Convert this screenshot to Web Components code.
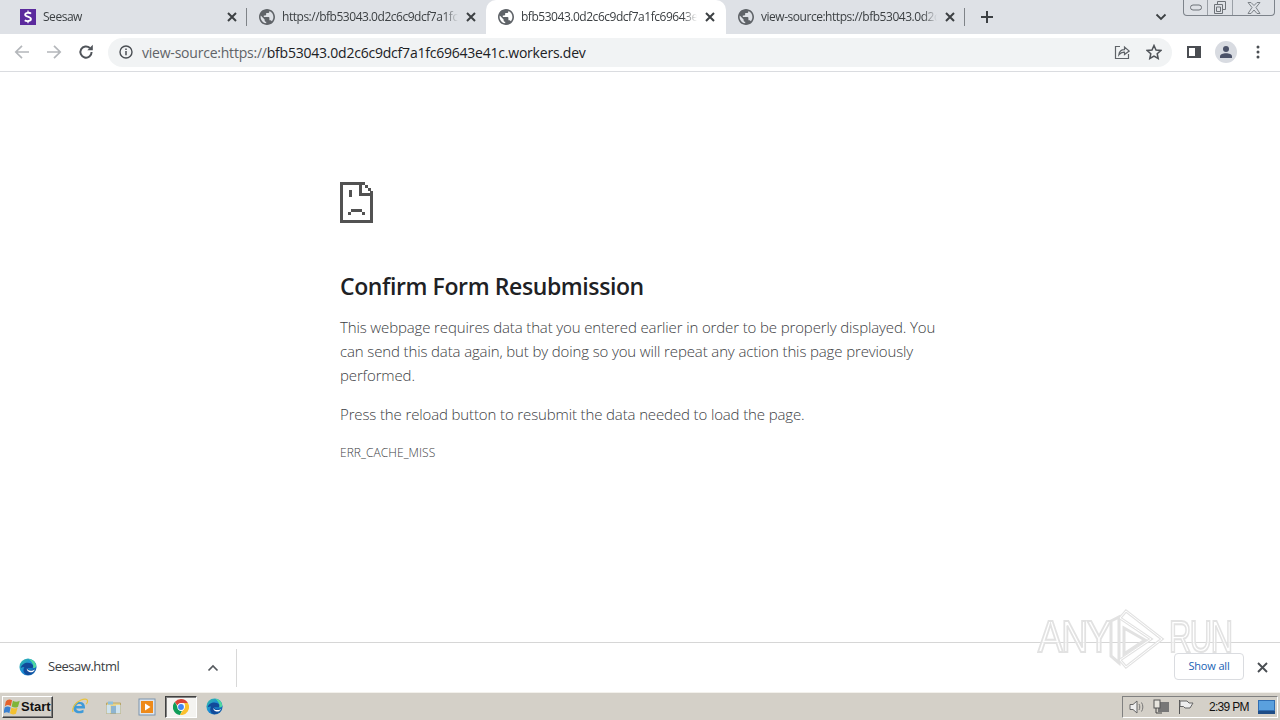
<!DOCTYPE html>
<html lang="en"><head><meta charset="utf-8"><title>Confirm Form Resubmission</title>
<style>
html,body{margin:0;padding:0;width:1280px;height:720px;overflow:hidden;background:#fff;font-family:"Open Sans","Noto Sans",sans-serif}
</style></head><body>
<browser-app>
  <tab-strip>
    <browser-tab icon="seesaw" title-text="Seesaw" sep></browser-tab>
    <browser-tab icon="globe" title-text="https://bfb53043.0d2c6c9dcf7a1fc69643e41c.workers.dev"></browser-tab>
    <browser-tab icon="globe" title-text="bfb53043.0d2c6c9dcf7a1fc69643e41c.workers.dev" active></browser-tab>
    <browser-tab icon="globe" title-text="view-source:https://bfb53043.0d2c6c9dcf7a1fc69643e41c.workers.dev" sep></browser-tab>
  </tab-strip>
  <nav-toolbar></nav-toolbar>
  <error-page>
    <span slot="title">Confirm Form Resubmission</span>
    <span slot="line1">This webpage requires data that you entered earlier in order to be properly displayed. You can send this data again, but by doing so you will repeat any action this page previously performed.</span>
    <span slot="line2">Press the reload button to resubmit the data needed to load the page.</span>
    <span slot="code">ERR_CACHE_MISS</span>
  </error-page>
  <download-shelf></download-shelf>
  <win-taskbar></win-taskbar>
  <any-watermark></any-watermark>
</browser-app>
<script>
const GLOBE='<svg width="16" height="16" viewBox="2 2 20 20"><path fill="#5f6368" d="M12 2C6.48 2 2 6.48 2 12s4.48 10 10 10 10-4.48 10-10S17.52 2 12 2zm-1 17.93c-3.95-.49-7-3.85-7-7.93 0-.62.08-1.21.21-1.79L9 15v1c0 1.1.9 2 2 2v1.93zm6.9-2.54c-.26-.81-1-1.39-1.9-1.39h-1v-3c0-.55-.45-1-1-1H8v-2h2c.55 0 1-.45 1-1V7h2c1.1 0 2-.9 2-2v-.41c2.93 1.19 5 4.06 5 7.41 0 2.08-.8 3.97-2.1 5.39z"/></svg>';
const SEESAW='<svg width="16" height="16" viewBox="0 0 16 16"><rect width="16" height="16" fill="#5b2a9d"/><path d="M11 4.600C10 3.600 5.400 3.200 5.200 5.600 5 8 10.900 7.200 10.900 10c0 2.400-4.600 2.600-6.100 1.200" fill="none" stroke="#fff" stroke-width="1.900"/><path d="M8 1.600v1.600M8 12.600v1.600" stroke="#fff" stroke-width="1.200"/></svg>';
const EDGE=s=>`<svg width="${s}" height="${s}" viewBox="0 0 20 20"><defs><linearGradient id="e1" x1="0" y1="0" x2="1" y2="1"><stop offset="0" stop-color="#35c1a0"/><stop offset=".45" stop-color="#1c8fd6"/><stop offset="1" stop-color="#0c4f9e"/></linearGradient></defs><circle cx="10" cy="10" r="9.500" fill="url(#e1)"/><path d="M2 11C3 5 12 3 15.500 8c.9 1.400.5 3-1.600 3H9.600c.2 2.400 4 3.600 8.400 1.600C16.600 16 13 19 9.500 19 5 18 4 13 6 10 4.500 10 3 10.400 2 11z" fill="#114a9a"/><path d="M8.800 11.500c.4 2.700 4.700 3.800 9 1.300-.5 1-1.300 2-2.400 2.800-3.300 1-7.300-.6-6.600-4.100z" fill="#fff"/><path d="M11 1c4 .4 7.600 3 8 7.500.2 2-1.500 2.700-3.500 2.500 1.400-3-1-6.500-4.500-10z" fill="#4fd8a0"/></svg>`;
function def(name,css,html){
  customElements.define(name,class extends HTMLElement{
    constructor(){super();this.attachShadow({mode:'open'}).innerHTML=`<style>${css}</style>${html}`;}
  });
}
def('browser-app',`:host{display:flex;flex-direction:column;width:1280px;height:720px;position:relative;overflow:hidden}`,`<slot></slot>`);

def('tab-strip',`:host{display:flex;height:34px;background:#dee1e6;padding-left:8px;box-sizing:border-box;align-items:stretch;position:relative;flex:none}
.tabs{display:flex}
.tail{display:flex;align-items:center;flex:1;position:relative}
.plus{margin-left:13px;width:18px;height:18px}
.chev{margin-left:auto;margin-right:113px}
.win{position:absolute;right:5px;top:0;width:92px;height:16px;box-sizing:border-box;border:1px solid #7d838b;border-top:0;border-radius:0 0 4px 4px;display:flex}
.win div{display:flex;align-items:center;justify-content:center;box-sizing:border-box}
.win .a{width:24px;border-right:1px solid #9a9fa6}.win .b{width:25px;border-right:1px solid #9a9fa6}.win .c{flex:1}
`,`<div class="tabs"><slot></slot></div><div class="tail">
<svg class="plus" viewBox="0 0 18 18"><path d="M9 3v12M3 9h12" stroke="#3c4043" stroke-width="2"/></svg>
<svg class="chev" width="12" height="8" viewBox="0 0 12 8"><path d="M1.500 1.500 6 6l4.500-4.500" fill="none" stroke="#3c4043" stroke-width="1.800"/></svg>
<div class="win"><div class="a"><svg width="14" height="7" viewBox="0 0 14 7"><rect x="1.500" y="1" width="11" height="5" rx="2.500" fill="none" stroke="#6d7278"/></svg></div>
<div class="b"><svg width="14" height="14" viewBox="0 0 14 14"><path d="M4.500 3V.5h8v8H10M1.500 3.500h8v9h-8zM3.500 6h4v4.500h-4z" fill="none" stroke="#6d7278"/></svg></div>
<div class="c"><svg width="14" height="12" viewBox="0 0 14 12"><path d="M1 .5h3L7 3.500 10 .5h3L9 5.500l4 6h-3L7 8 4 11.500H1l4-6z" fill="none" stroke="#7d8288"/></svg></div></div></div>`);

customElements.define('browser-tab',class extends HTMLElement{
  constructor(){super();this.attachShadow({mode:'open'});}
  connectedCallback(){
    const active=this.hasAttribute('active');
    const ico=this.getAttribute('icon')==='seesaw'?SEESAW:GLOBE;
    this.shadowRoot.innerHTML=`<style>
    :host{display:block;width:${active?240:239}px;height:34px;position:relative;box-sizing:border-box;flex:none}
    .t{height:34px;box-sizing:border-box;padding:0 0 0 12px;display:flex;align-items:center;position:relative;color:#3c4043;font:12px/16px "Open Sans","Noto Sans",sans-serif;letter-spacing:-.47px;${active?'background:#fff;border-radius:10px 10px 0 0':''}}
    .i{width:16px;height:16px;flex:none;display:flex}
    .l{margin-left:7px;width:176px;white-space:nowrap;overflow:hidden;flex:none;-webkit-mask-image:linear-gradient(90deg,#000 calc(100% - 14px),transparent);mask-image:linear-gradient(90deg,#000 calc(100% - 14px),transparent)}
    .x{width:12px;height:12px;flex:none;margin-left:7px}
    .s{position:absolute;right:0;top:8px;height:18px;width:1px;background:#7f8388}
    </style><div class="t"><span class="i">${ico}</span><span class="l">${this.getAttribute('title-text')}</span><svg class="x" viewBox="0 0 12 12"><path d="M2 2l8 8M10 2l-8 8" stroke="#3c4043" stroke-width="2"/></svg>${this.hasAttribute('sep')?'<i class="s"></i>':''}</div>`;
  }
});

def('nav-toolbar',`:host{display:flex;align-items:center;height:38px;flex:none;box-sizing:border-box;background:#fff;border-bottom:1px solid #dadce0;padding:0 0 1px 0;font:14px/20px "Open Sans","Noto Sans",sans-serif}
.n{display:flex;width:32px;justify-content:center;flex:none}
.nav{display:flex;padding-left:6px}
.omni{margin-left:6px;width:1064px;height:29px;border-radius:15px;background:#f1f3f4;display:flex;align-items:center;box-sizing:border-box;padding-left:11px;flex:none}
.url{margin:1px 0 0 9px;color:#5f6368;letter-spacing:-.22px;white-space:nowrap}.url b{font-weight:400;color:#202124}
.end{margin-left:auto;display:flex;align-items:center}
.share{margin-right:16px;display:flex}.star{margin-right:10px;display:flex}
.right{display:flex;align-items:center;margin-left:15px}
.av{width:22px;height:22px;border-radius:50%;background:#d8dbe1;display:flex;align-items:center;justify-content:center;margin-left:14px}
.ke{margin-left:19px;display:flex}
`,`<div class="nav">
<div class="n"><svg width="16" height="16" viewBox="0 0 16 16"><path d="M15 8H2M8 1.800 1.800 8 8 14.200" fill="none" stroke="#b4b7bb" stroke-width="1.700"/></svg></div>
<div class="n"><svg width="16" height="16" viewBox="0 0 16 16"><path d="M1 8h13M8 1.800 14.200 8 8 14.200" fill="none" stroke="#b4b7bb" stroke-width="1.700"/></svg></div>
<div class="n"><svg width="16" height="16" viewBox="0 0 16 16"><path d="M13.600 8a5.600 5.600 0 1 1-1.700-4" fill="none" stroke="#50545a" stroke-width="2"/><path d="M9.300 6.300h5.500V.8z" fill="#50545a"/></svg></div></div>
<div class="omni"><svg width="14" height="14" viewBox="0 0 14 14"><circle cx="7" cy="7" r="6" fill="none" stroke="#4a4e53" stroke-width="1.400"/><path d="M7 6v4.200M7 3.400v1.500" stroke="#4a4e53" stroke-width="1.500"/></svg>
<span class="url">view-source:https://<b>bfb53043.0d2c6c9dcf7a1fc69643e41c.workers.dev</b></span>
<div class="end"><span class="share"><svg width="16" height="16" viewBox="0 0 16 16"><path d="M14.500 10v4.500h-13v-12H6" fill="none" stroke="#5f6368" stroke-width="1.200"/><path d="M4.800 11c.4-3.500 3-5.300 5.700-5.300V3l4.700 4-4.700 3.600V8.200C8.500 8 6.400 9 4.800 11z" fill="none" stroke="#5f6368" stroke-width="1.200"/></svg></span>
<span class="star"><svg width="16" height="16" viewBox="0 0 16 16"><path d="M8 1.500l2 4.500 4.800.5-3.600 3.200 1 4.800L8 12.100 3.800 14.500l1-4.800L1.200 6.500 6 6z" fill="none" stroke="#4f5358" stroke-width="1.500"/></svg></span></div></div>
<div class="right"><svg width="14" height="14" viewBox="0 0 14 14" shape-rendering="crispEdges"><rect x="0" y="1" width="14" height="12" fill="#4a4d52"/><rect x="2" y="3" width="6" height="8" fill="#fff"/></svg>
<span class="av"><svg width="14" height="14" viewBox="0 0 14 14"><circle cx="7" cy="4" r="3" fill="#4b5268"/><path d="M1 13v-1.500C1 9.500 4 8.300 7 8.300s6 1.200 6 3.200V13z" fill="#4b5268"/></svg></span>
<span class="ke"><svg width="4" height="14" viewBox="0 0 4 14"><circle cx="2" cy="2" r="1.500" fill="#4a4e53"/><circle cx="2" cy="7" r="1.500" fill="#4a4e53"/><circle cx="2" cy="12" r="1.500" fill="#4a4e53"/></svg></span></div>`);

def('error-page',`:host{display:block;flex:1;min-height:0;background:#fff;padding:110px 0 0 340px;box-sizing:border-box;color:#3c4043;font:15px/24px "Open Sans","Noto Sans",sans-serif}
svg{display:block}
h1{margin:47px 0 0;font:600 23px/32px "Open Sans","Noto Sans",sans-serif;color:#202124;letter-spacing:-.4px}
p{margin:0;width:600px;letter-spacing:-.13px;font-weight:300}
.a{margin-top:13px}.b{margin-top:15px}
.c{margin-top:19px;font-size:12px;line-height:16px;letter-spacing:.05px;font-weight:300}
`,`<svg width="33" height="41" viewBox="0 0 33 41" shape-rendering="crispEdges"><path fill="#525252" d="M0 0h22v3H3v35h27V11h3v30H0zM19 0h3v11h11v3H19zM22 0h3v3h3v3h3v3h2v2h-3V9h-2V6h-3V3h-3zM9 8h3v7H9zM11 27h11v3H11zM8 30h3v3H8zM22 30h3v3h-3z"/></svg>
<h1><slot name="title"></slot></h1><p class="a"><slot name="line1"></slot></p><p class="b"><slot name="line2"></slot></p><div class="c"><slot name="code"></slot></div>`);

def('download-shelf',`:host{display:flex;align-items:center;height:50px;flex:none;box-sizing:border-box;background:#fff;border-top:1px solid #d6d6d6;font:13px/18px "Open Sans","Noto Sans",sans-serif;color:#3c4043}
.item{display:flex;align-items:center;width:237px;height:38px;box-sizing:border-box;padding-left:19px;border-right:1px solid #d8d8d8;flex:none}
.ic{display:flex;margin-top:-1px}
.name{margin:-3px 0 0 11px;letter-spacing:-.47px}
.up{margin-left:auto;margin-right:17px}
.show{margin:-3px 0 0 auto;width:70px;height:27px;box-sizing:border-box;border:1px solid #dadce0;border-radius:4px;color:#1a5fb4;font-size:11px;letter-spacing:-.16px;display:flex;align-items:center;justify-content:center}
.x{margin:0 12px 0 13px}
`,`<div class="item"><span class="ic">${EDGE(18)}</span><span class="name">Seesaw.html</span><svg class="up" width="12" height="8" viewBox="0 0 12 8"><path d="M1.500 6.500 6 2l4.500 4.500" fill="none" stroke="#55595e" stroke-width="1.700"/></svg></div>
<div class="show">Show all</div><svg class="x" width="11" height="11" viewBox="0 0 11 11"><path d="M1 1l9 9M10 1l-9 9" stroke="#4a4e53" stroke-width="1.900"/></svg>`);

def('win-taskbar',`:host{display:flex;align-items:center;height:28px;flex:none;box-sizing:border-box;background:#d4d0c8;border-top:1px solid #f3f1ec;padding:0 2px;font:12px/14px "Liberation Sans",sans-serif;color:#111}
.start{width:51px;height:22px;box-sizing:border-box;border:1px solid;border-color:#fff #404040 #404040 #fff;box-shadow:inset -1px -1px 0 #808080;display:flex;align-items:center;padding-left:1px;font:700 13px/14px "Liberation Sans",sans-serif;flex:none}
.start span{margin-left:0}
.q{display:flex;align-items:center;margin-left:18px}
.q>span{display:flex;justify-content:center;align-items:center;width:18px;height:18px;flex:none}
.pressed{box-sizing:border-box;width:32px!important;height:22px!important;margin-left:9px;border:1px solid;border-color:#404040 #fff #fff #404040;background:#f4f3f0;box-shadow:inset 1px 1px 0 #808080}
.tray{margin-left:auto;width:156px;height:22px;box-sizing:border-box;border:1px solid;border-color:#808080 #fff #fff #808080;display:flex;align-items:center;padding-left:6px}
.tray svg{flex:none}.time{margin-left:15px;width:44px;letter-spacing:-.7px;font-size:12px;white-space:nowrap}
`,`<div class="start"><svg width="17" height="19" viewBox="0 0 20 20" preserveAspectRatio="none"><path d="M2 5C4 2 7 2 9.500 3.500L8 9.500C5.500 8 3.500 8 1 10z" fill="#e5622b"/><path d="M10.500 4c2.500 1.500 5 1.500 8 0l-2 6.200c-2.500 1.300-5 1.200-7.500-.2z" fill="#7fb539"/><path d="M.8 11c2-1.500 4.500-1.500 7 0L6.300 17c-2-1.300-4.300-1.300-7 .2z" fill="#3b80d0"/><path d="M8.800 11c2.300 1.300 4.500 1.400 7.200.2L14 17.500c-2.500 1.200-5 1-7-.3z" fill="#f3c130"/></svg><span>Start</span></div>
<div class="q"><span><svg width="18" height="18" viewBox="0 0 18 18"><path d="M14 10.600H5.200c.3 2.300 3.600 3.200 7.300 1.200v2.600c-5 2.200-10.200.6-10.200-4.400C2.300 6.400 5.300 4 9 4c3.300 0 5 2 5 5.500zM5.400 8h5.500c-.2-2.500-5-2.600-5.500 0z" fill="#3f9ad8"/><path d="M2 14C.5 10 5 4 10 2c3-1.200 6-1.300 6.500.5.300 1-.3 2.500-1.200 3.700" fill="none" stroke="#e9c33d" stroke-width="1.200"/></svg></span>
<span style="margin-left:15px"><svg width="17" height="16" viewBox="0 0 17 16"><path d="M1.500 4h14v10.500h-14z" fill="#e8d48a" stroke="#b8a66a"/><path d="M3 2.500h5v3H3z" fill="#8cc0de"/><path d="M6 7h5v7.500H6z" fill="#8db4d0"/><path d="M1.500 6h4v8.500h-4zM11 6h4.500v8.500H11z" fill="#cfe3ee"/></svg></span>
<span style="margin-left:16px"><svg width="18" height="18" viewBox="0 0 18 18"><rect x="1" y="1" width="16" height="16" fill="#dfe6ee" stroke="#7b93ad"/><rect x="3" y="3" width="12" height="12" fill="#ee8a1a"/><path d="M7 5.500v7l5.500-3.500z" fill="#fff"/></svg></span>
<span class="pressed"><svg width="16" height="16" viewBox="0 0 16 16"><path d="M8 0a8 8 0 0 1 6.900 4H8A4 4 0 0 0 4.300 6.500L1.800 2.900A8 8 0 0 1 8 0z" fill="#db4437"/><path d="M1.800 2.900 5.300 9A3.500 3.500 0 0 0 8.900 11.900L7 16A8 8 0 0 1 1.800 2.900z" fill="#0f9d58"/><path d="M14.900 4A8 8 0 0 1 7 16l3.500-6A4 4 0 0 0 11 4z" fill="#fbc02d"/><circle cx="8" cy="8" r="3.700" fill="#fff"/><circle cx="8" cy="8" r="2.900" fill="#4285f4"/></svg></span>
<span style="margin-left:8px">${EDGE(17).replaceAll('e1','e2')}</span></div>
<div class="tray"><svg width="17" height="16" viewBox="0 0 17 16"><path d="M1 5.500h3L8 2v12l-4-3.500H1z" fill="#eee" stroke="#666"/><path d="M10 5c1 1.500 1 4.500 0 6M12.500 3.500c1.800 2.500 1.800 6.500 0 9" fill="none" stroke="#777"/></svg>
<svg style="margin-left:7px" width="17" height="16" viewBox="0 0 17 16"><rect x="5" y="3" width="11" height="10" fill="#777"/><rect x="1" y="1" width="6" height="8" fill="#e8e6df" stroke="#555"/><path d="M3 9v5h6" fill="none" stroke="#444"/></svg>
<svg style="margin-left:7px" width="17" height="16" viewBox="0 0 17 16"><path d="M2.500 1v14" stroke="#555"/><path d="M3 2h7l2 2 4 0-3 5H8L6.500 7.500H3z" fill="#eee" stroke="#666"/></svg>
<span class="time">2:39 PM</span>
<svg style="margin-left:5px" width="17" height="14" viewBox="0 0 17 14"><rect width="17" height="14" fill="#2f6db2"/><rect x="1" y="1" width="15" height="9" fill="#5aa0de"/><rect y="11" width="17" height="3" fill="#1e4c86"/></svg></div>`);

def('any-watermark',`:host{position:absolute;left:1038px;top:606px;width:200px;height:66px;display:flex;align-items:center;pointer-events:none}
span{display:block;font:400 44px/60px "Liberation Sans",sans-serif;color:rgba(255,255,255,.6);-webkit-text-stroke:2px #e2e2e2;letter-spacing:-2px;transform-origin:left center;white-space:nowrap;margin-top:-4px}
.a{width:69px;transform:scaleX(.85)}.r{width:62px;margin-left:4px;transform:scaleX(.7)}
svg{flex:none}
`,`<span class="a">ANY</span><svg width="58" height="66" viewBox="0 0 58 66"><g fill="none"><path d="M4 15 12 11V57L4 50zM17 22 38 34 17 48z" stroke="#e2e2e2" stroke-width="3"/><path d="M13 12 19 5 55 33 19 61 13 54 44 33z" stroke="#e2e2e2" stroke-width="3"/><path d="M13 12 19 5 55 33 19 61 13 54 44 33z" stroke="#fff" stroke-width="1"/></g></svg><span class="r">RUN</span>`);
</script>
</body></html>
